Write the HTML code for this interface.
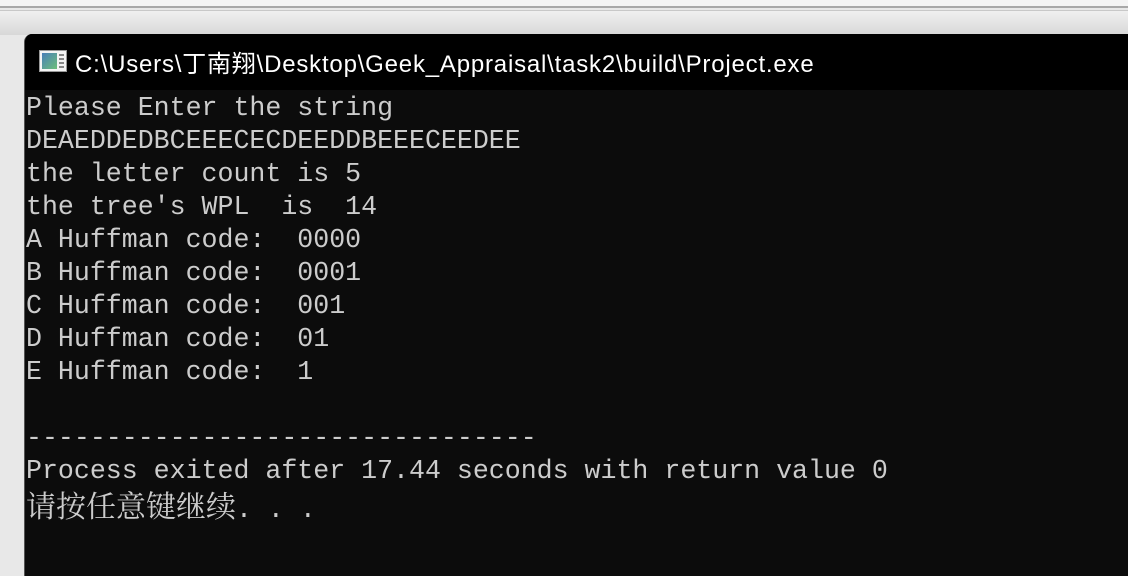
<!DOCTYPE html>
<html><head><meta charset="utf-8"><style>
html,body{margin:0;width:1128px;height:576px;overflow:hidden}
body{background:#e8e8e8;position:relative;font-family:"Liberation Sans",sans-serif}
.tb{position:absolute;left:0;top:0;width:1128px;height:6px;background:#f4f4f4;border-bottom:2px solid #a8a8a8}
.tb2{position:absolute;left:0;top:10px;width:1128px;height:24px;background:linear-gradient(#f0f0f0,#d8d8d8);border-top:1px solid #c8c8c8}
.win{position:absolute;left:24px;top:34px;width:1110px;height:542px;background:#0c0c0c;border-radius:8px 0 0 0;overflow:hidden;border-left:1px solid #555}
.title{height:56px;background:#000;position:relative}
.title span{position:absolute;left:50px;top:10px;color:#fff;font-size:24px;letter-spacing:0.8px;font-family:"Liberation Sans","Noto Sans CJK SC",sans-serif}
.icon{position:absolute;left:14px;top:16px;width:28px;height:22px;background:#f4f4f4;border:1px solid #999;box-sizing:border-box}
.icon i{position:absolute;left:2px;top:2px;width:15px;height:16px;background:linear-gradient(135deg,#4a7fb8,#6cbf7a)}
.icon b{position:absolute;left:19px;top:3px;width:5px;height:14px;background:repeating-linear-gradient(#888 0 2px,#f4f4f4 2px 4px)}
pre{margin:0;padding:2px 0 0 1px;color:#cccccc;font-family:"Liberation Mono","Noto Serif CJK SC",monospace;font-size:26.6px;line-height:33px}
.cj{font-family:"Noto Serif CJK SC",serif;font-size:30px;line-height:33px}
</style></head><body>
<div class="tb"></div><div class="tb2"></div>
<div class="win">
<div class="title"><div class="icon"><i></i><b></b></div><span>C:\Users\丁南翔\Desktop\Geek_Appraisal\task2\build\Project.exe</span></div>
<pre>Please Enter the string
DEAEDDEDBCEEECECDEEDDBEEECEEDEE
the letter count is 5
the tree's WPL  is  14
A Huffman code:  0000
B Huffman code:  0001
C Huffman code:  001
D Huffman code:  01
E Huffman code:  1

--------------------------------
Process exited after 17.44 seconds with return value 0
<span class="cj">请按任意键继续</span>. . .</pre>
</div>
</body></html>
